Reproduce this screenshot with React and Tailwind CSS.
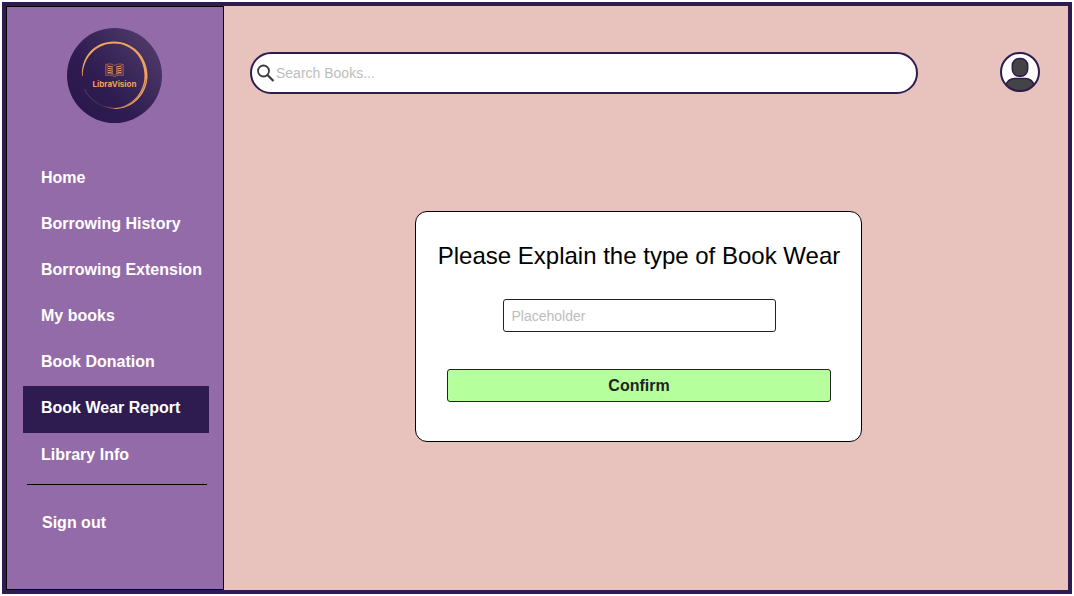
import React, { useState } from "react";

const LINKS = [
  "Home",
  "Borrowing History",
  "Borrowing Extension",
  "My books",
  "Book Donation",
  "Book Wear Report",
  "Library Info",
];

function Logo() {
  return (
    <svg viewBox="0 0 95 95" className="size-[95px]" role="img" aria-label="LibraVision">
      <defs>
        <linearGradient id="disc" x1="0.15" y1="0.8" x2="0.85" y2="0.2">
          <stop offset="0" stopColor="#2b184d" />
          <stop offset="0.35" stopColor="#2f1c51" />
          <stop offset="1" stopColor="#4a3766" />
        </linearGradient>
        <linearGradient id="tail" x1="0" y1="0" x2="1" y2="0">
          <stop offset="0" stopColor="#f5a65b" stopOpacity="0.35" />
          <stop offset="0.6" stopColor="#f5a65b" stopOpacity="0.15" />
          <stop offset="1" stopColor="#f5a65b" stopOpacity="0.8" />
        </linearGradient>
      </defs>
      <circle cx="47.5" cy="47.5" r="47.5" fill="url(#disc)" />
      <path
        d="M15 48C14 28 28 13.5 47 13.5C66 13.5 80.500 29 80.500 47.500C80.500 66 66 81 48 81L48 80C64 79 77.500 65 77.500 47.500C77.500 29 64 15.500 47 15.500C30 15.500 16 29 15.700 48Z"
        fill="#f0a35c"
      />
      <path d="M79 51C77 66 65 78 52 80" fill="none" stroke="#4a3766" strokeWidth="0.4" />
      <path d="M17.500 61C22 71 33 79.500 48 80.500" fill="none" stroke="url(#tail)" strokeWidth="0.8" />
      <g fill="none" stroke="#d8915a" strokeWidth="0.5">
        <path d="M40 36.500H38.700V47.500C42 47 45 47.300 47.500 48.600C50 47.300 53 47 56.300 47.500V36.500H55" />
        <path d="M47.500 37.500C45.500 36 43 35.800 40.200 36V45.800C43 45.600 45.500 46 47.500 47.200C49.500 46 52 45.600 54.800 45.800V36C52 35.800 49.500 36 47.500 37.500" />
        <path
          stroke="#f0a35c"
          strokeWidth="1"
          d="M41 38.200L46 39M41 40.300L46 41.100M41 42.400L46 43.200M41 44.400L46 45.200M54 38.200L49 39M54 40.300L49 41.100M54 42.400L49 43.200M54 44.400L49 45.200"
        />
      </g>
      <text
        x="47.500"
        y="58.500"
        textAnchor="middle"
        fill="#f0a35c"
        className="font-['Inter',sans-serif] text-[8px] font-bold"
      >
        LibraVision
      </text>
    </svg>
  );
}

function Sidebar() {
  return (
    <aside className="w-[218px] shrink-0 border border-black bg-[#946ba9] pt-[21px] pb-6 text-base font-bold text-white">
      <div className="flex justify-center pr-0.5">
        <Logo />
      </div>
      <nav aria-label="Main" className="mt-[33px] pr-3.5 pl-4">
        <ul>
          {LINKS.map((label) => {
            const active = label === "Book Wear Report";
            return (
              <li key={label}>
                <a
                  href="#"
                  aria-current={active ? "page" : undefined}
                  className={
                    active
                      ? "block h-[47px] bg-[#2e1b4f] pt-2.5 pl-[18px] whitespace-nowrap"
                      : "block h-[46px] pt-2.5 pl-[18px] whitespace-nowrap"
                  }
                >
                  {label}
                </a>
              </li>
            );
          })}
        </ul>
        <hr className="mt-[5px] mr-0.5 ml-1 border-black" />
        <a href="#" className="mt-4 block h-[46px] pt-2.5 pl-[19px]">
          Sign out
        </a>
      </nav>
    </aside>
  );
}

function Header() {
  return (
    <header className="flex items-start">
      <label className="flex h-[42px] min-w-0 flex-1 items-center rounded-full border-2 border-[#2e1b4f] bg-white pr-4 pl-1">
        <svg viewBox="0 0 20 20" className="size-5 shrink-0" fill="none" stroke="#3b3b3b" aria-hidden="true">
          <circle cx="7.500" cy="8" r="5.500" strokeWidth="1.800" />
          <path d="M11.500 12L17.500 18" strokeWidth="2.200" />
        </svg>
        <input
          type="search"
          aria-label="Search books"
          placeholder="Search Books..."
          className="h-5 min-w-0 flex-1 bg-transparent text-sm outline-none placeholder:text-[#bdbdbd]"
        />
      </label>
      <button type="button" aria-label="Account" className="ml-[82px] size-10 shrink-0">
        <svg viewBox="0 0 40 40" className="size-10">
          <defs>
            <clipPath id="avatar">
              <circle cx="20" cy="20" r="19" />
            </clipPath>
          </defs>
          <circle cx="20" cy="20" r="19" fill="#fff" />
          <g clipPath="url(#avatar)" fill="#444" stroke="#2e1b4f" strokeWidth="1.500">
            <rect x="12.300" y="6.500" width="15.400" height="17.800" rx="7" />
            <path d="M5.500 34C7 28.500 10.500 26.500 15 26.500H25C29.500 26.500 33 28.500 34.500 34V42H5.500Z" />
          </g>
          <circle cx="20" cy="20" r="19" fill="none" stroke="#2e1b4f" strokeWidth="2" />
        </svg>
      </button>
    </header>
  );
}

function WearForm() {
  const [reason, setReason] = useState("");
  return (
    <form
      onSubmit={(e) => e.preventDefault()}
      className="flex w-full max-w-[447px] flex-col items-center rounded-xl border border-black bg-white pt-7 pr-[30px] pb-[39px] pl-[31px]"
    >
      <label htmlFor="wear" className="text-2xl whitespace-nowrap text-black">
        Please Explain the type of Book Wear
      </label>
      <input
        id="wear"
        type="text"
        value={reason}
        onChange={(e) => setReason(e.target.value)}
        placeholder="Placeholder"
        className="mt-[27px] h-[33px] w-[273px] max-w-full rounded-[3px] border border-[#222] bg-white px-2 text-sm outline-none placeholder:text-[#bdbdbd]"
      />
      <button
        type="submit"
        className="mt-[37px] h-[33px] w-full rounded-[3px] border border-[#222] bg-[#b5ff9c] text-base font-bold text-[#222]"
      >
        Confirm
      </button>
    </form>
  );
}

export default function App() {
  return (
    <div className="flex min-h-screen bg-white p-0.5 font-['Liberation_Sans',Arial,sans-serif]">
      <div className="flex flex-1 border-4 border-[#2e1b4f] bg-[#e8c2bd]">
        <Sidebar />
        <main className="min-w-0 flex-1 pt-[46px] pr-7 pb-10 pl-[26px]">
          <Header />
          <div className="mt-[117px] flex justify-center pr-[13px]">
            <WearForm />
          </div>
        </main>
      </div>
    </div>
  );
}
